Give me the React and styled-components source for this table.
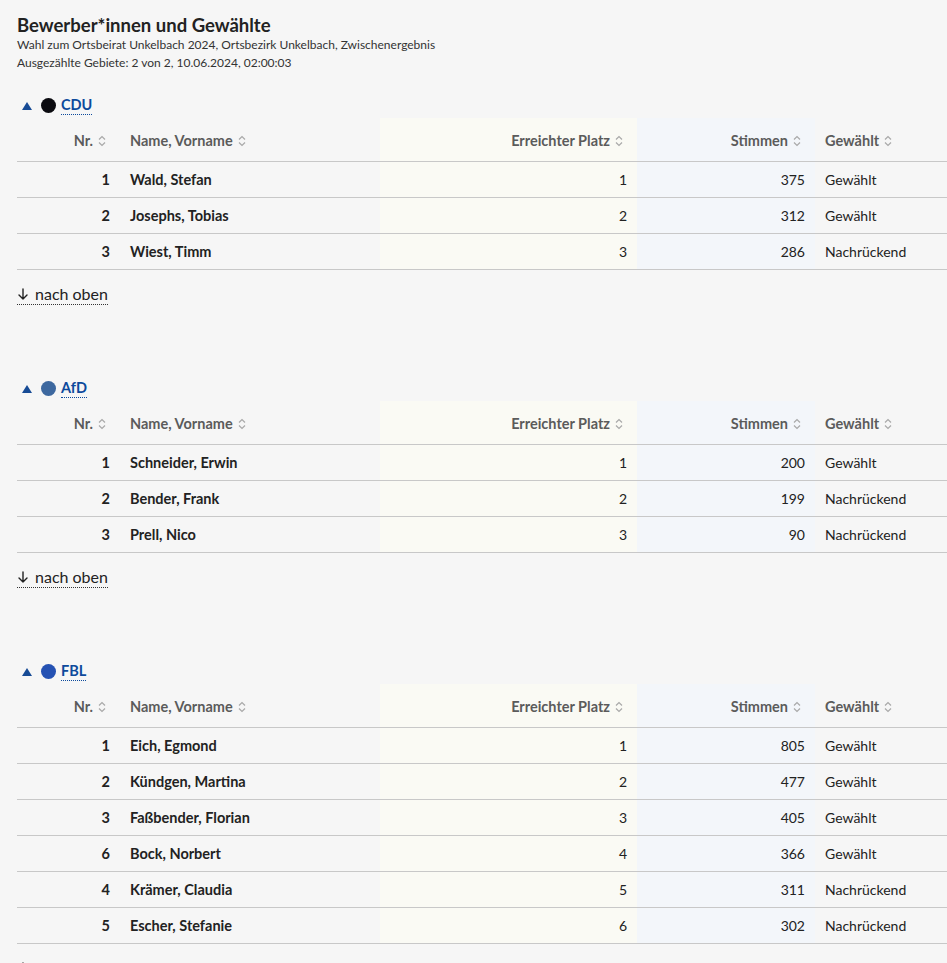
import React from "react";
import styled, { createGlobalStyle } from "styled-components";

const GlobalStyle = createGlobalStyle`
  html, body { margin: 0; padding: 0; background: #f6f6f6; }
  body { font-family: Lato, "Noto Sans", "Liberation Sans", sans-serif; color: #222; overflow-x: hidden; }
`;

const Page = styled.div`
  padding: 14px 0 0 17px;
`;

const Title = styled.h1`
  margin: 0;
  font-size: 18.5px;
  line-height: 22px;
  font-weight: 700;
  color: #222;
`;

const Meta = styled.div`
  font-size: 12px;
  line-height: 18px;
  color: #333;
`;

const Section = styled.section`
  margin-top: ${(p) => (p.$first ? "20px" : "70px")};
`;

const Heading = styled.div`
  display: flex;
  align-items: center;
  height: 26px;
  padding: 1px 0 0 5px;
  box-sizing: border-box;
`;

const Triangle = styled.span`
  width: 0;
  height: 0;
  border-left: 5px solid transparent;
  border-right: 5px solid transparent;
  border-bottom: 8px solid #174b95;
  margin-right: 9px;
`;

const Dot = styled.span`
  width: 15px;
  height: 15px;
  border-radius: 50%;
  background: ${(p) => p.$color};
  margin-right: 5px;
`;

const PartyName = styled.span`
  font-size: 14.5px;
  font-weight: 700;
  color: #0d4a9c;
  line-height: 18px;
  border-bottom: 1px dotted #0d4a9c;
`;

const Table = styled.table`
  width: 930px;
  border-collapse: collapse;
  table-layout: fixed;
  font-size: 14px;
`;

const Th = styled.th`
  height: 42px;
  padding: 1px ${(p) => (p.$align === "right" ? "14px" : "10px")} 0 10px;
  font-size: 14.5px;
  font-weight: 700;
  color: #5b5b5b;
  text-align: ${(p) => p.$align || "left"};
  background: ${(p) => p.$bg || "transparent"};
  border-bottom: 1px solid #c8c8c8;
  white-space: nowrap;
`;

const Td = styled.td`
  height: 35px;
  padding: 0 10px;
  text-align: ${(p) => p.$align || "left"};
  font-size: ${(p) => (p.$bold ? "14.5px" : "14px")};
  font-weight: ${(p) => (p.$bold ? 700 : 400)};
  color: #222;
  background: ${(p) => p.$bg || "transparent"};
  border-bottom: 1px solid #c8c8c8;
  white-space: nowrap;
`;

const SortIcon = styled.svg`
  display: inline-block;
  vertical-align: -1px;
  margin-left: 5px;
`;

const Sort = () => (
  <SortIcon width="8" height="12" viewBox="0 0 8 12">
    <path d="M1 4.5 L4 1.5 L7 4.5 M1 7.5 L4 10.5 L7 7.5" fill="none" stroke="#a9a9a9" strokeWidth="1.2" />
  </SortIcon>
);

const TopLink = styled.div`
  padding-top: 14px;
`;

const TopAnchor = styled.span`
  display: inline-flex;
  align-items: center;
  gap: 7px;
  font-size: 16px;
  line-height: 20px;
  color: #222;
  border-bottom: 1px dotted #333;
`;

const ArrowIcon = styled.svg`
  display: block;
  margin-left: 1px;
`;

const DownArrow = () => (
  <ArrowIcon width="10" height="12" viewBox="0 0 10 12">
    <path d="M5 1 V11 M1 7 L5 11 L9 7" fill="none" stroke="#222" strokeWidth="1.4" strokeLinecap="round" strokeLinejoin="round" />
  </ArrowIcon>
);

const YELLOW = "#fafaf4";
const BLUE = "#f3f6fa";

const parties = [
  {
    name: "CDU",
    color: "#0b0b10",
    rows: [
      [1, "Wald, Stefan", 1, 375, "Gewählt"],
      [2, "Josephs, Tobias", 2, 312, "Gewählt"],
      [3, "Wiest, Timm", 3, 286, "Nachrückend"],
    ],
  },
  {
    name: "AfD",
    color: "#3d689f",
    rows: [
      [1, "Schneider, Erwin", 1, 200, "Gewählt"],
      [2, "Bender, Frank", 2, 199, "Nachrückend"],
      [3, "Prell, Nico", 3, 90, "Nachrückend"],
    ],
  },
  {
    name: "FBL",
    color: "#2552b3",
    rows: [
      [1, "Eich, Egmond", 1, 805, "Gewählt"],
      [2, "Kündgen, Martina", 2, 477, "Gewählt"],
      [3, "Faßbender, Florian", 3, 405, "Gewählt"],
      [6, "Bock, Norbert", 4, 366, "Gewählt"],
      [4, "Krämer, Claudia", 5, 311, "Nachrückend"],
      [5, "Escher, Stefanie", 6, 302, "Nachrückend"],
    ],
  },
];

export default function App() {
  return (
    <>
      <GlobalStyle />
      <Page>
        <Title>Bewerber*innen und Gewählte</Title>
        <Meta>Wahl zum Ortsbeirat Unkelbach 2024, Ortsbezirk Unkelbach, Zwischenergebnis</Meta>
        <Meta>Ausgezählte Gebiete: 2 von 2, 10.06.2024, 02:00:03</Meta>
        {parties.map((p, i) => (
          <Section key={p.name} $first={i === 0}>
            <Heading>
              <Triangle />
              <Dot $color={p.color} />
              <PartyName>{p.name}</PartyName>
            </Heading>
            <Table>
              <colgroup>
                <col style={{ width: 103 }} />
                <col style={{ width: 260 }} />
                <col style={{ width: 257 }} />
                <col style={{ width: 178 }} />
                <col style={{ width: 132 }} />
              </colgroup>
              <thead>
                <tr>
                  <Th $align="right">Nr.<Sort /></Th>
                  <Th>Name, Vorname<Sort /></Th>
                  <Th $align="right" $bg={YELLOW}>Erreichter Platz<Sort /></Th>
                  <Th $align="right" $bg={BLUE}>Stimmen<Sort /></Th>
                  <Th>Gewählt<Sort /></Th>
                </tr>
              </thead>
              <tbody>
                {p.rows.map((r) => (
                  <tr key={r[1]}>
                    <Td $align="right" $bold>{r[0]}</Td>
                    <Td $bold>{r[1]}</Td>
                    <Td $align="right" $bg={YELLOW}>{r[2]}</Td>
                    <Td $align="right" $bg={BLUE}>{r[3]}</Td>
                    <Td>{r[4]}</Td>
                  </tr>
                ))}
              </tbody>
            </Table>
            <TopLink>
              <TopAnchor><DownArrow />nach oben</TopAnchor>
            </TopLink>
          </Section>
        ))}
      </Page>
    </>
  );
}
